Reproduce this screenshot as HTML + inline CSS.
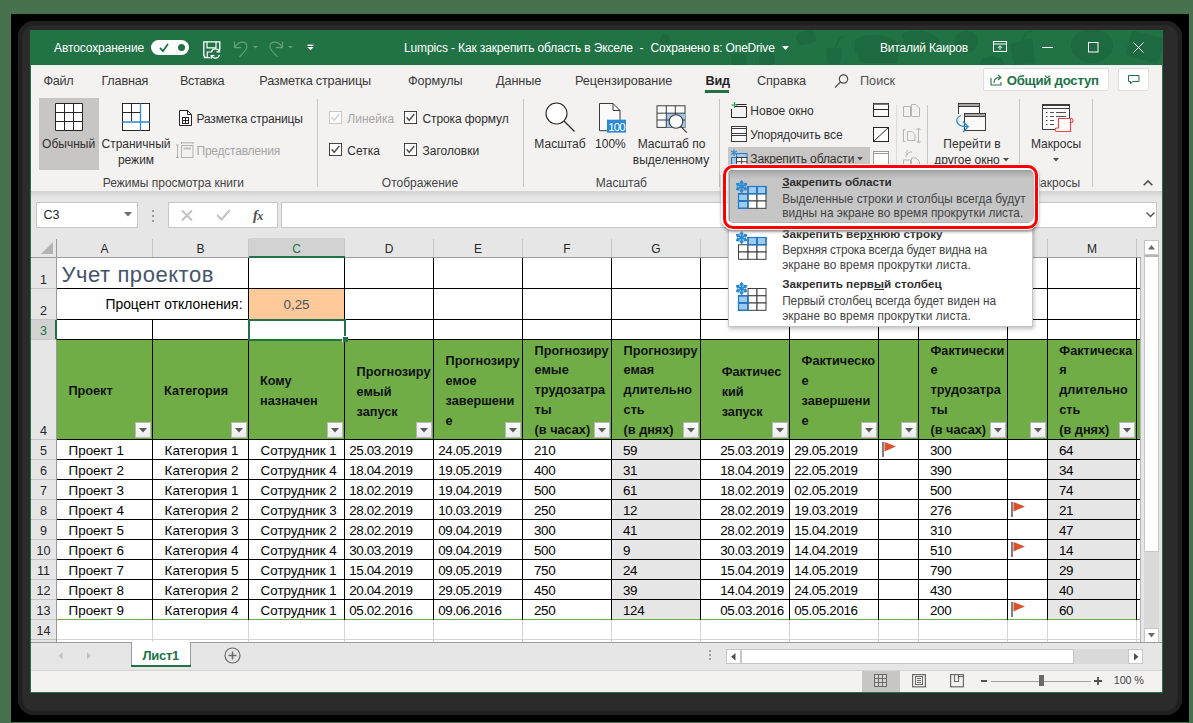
<!DOCTYPE html>
<html><head><meta charset="utf-8">
<style>
*{margin:0;padding:0;box-sizing:border-box}
html,body{width:1193px;height:723px;overflow:hidden;background:#48724e;font-family:"Liberation Sans", sans-serif;position:relative}
.a{position:absolute}
.t{position:absolute;white-space:nowrap;line-height:1}
svg{overflow:visible}
</style></head><body>

<div class="a" style="left:11px;top:14px;width:1178px;height:708px;background:#000;"></div>
<div class="a" style="left:18px;top:21px;width:1164px;height:694px;background:#2b2b2b;border-radius:16px;box-shadow:inset 0 0 0 4px #202020, inset 0 0 0 5px #272727"></div>
<div class="a" style="left:30px;top:30px;width:1133px;height:663px;background:#f3f2f1;border:1px solid #217346"></div>
<div class="a" style="left:30px;top:30px;width:1133px;height:35px;background:#217346;"></div>
<svg class="a" style="left:630px;top:30px;overflow:hidden" width="533" height="35" viewBox="0 0 533 35"><g fill="#1e6a40">
<ellipse cx="35" cy="10" rx="5" ry="6"/>
<rect x="101" y="24" width="15" height="12" rx="3"/>
<ellipse cx="137" cy="29" rx="8" ry="9"/>
<rect x="166" y="1" width="20" height="13" rx="5" transform="rotate(-10 176 7)"/>
<path d="M196 18 L212 18 L210 34 L198 34 Z"/><path d="M205 18 L210 8 L214 7" stroke="#1e6a40" stroke-width="1.5" fill="none"/>
<path d="M227 8 C240 2 262 4 268 14 L268 33 L232 33 C226 26 222 14 227 8 Z"/>
<path d="M272 4 C282 -2 305 0 309 10 L306 22 L276 22 Z"/>
<ellipse cx="336" cy="12" rx="12" ry="11"/>
<ellipse cx="362" cy="34" rx="12" ry="8"/>
<path d="M380 14 L402 8 L405 33 L384 35 Z"/><path d="M392 10 L396 2 L402 1" stroke="#1e6a40" stroke-width="1.5" fill="none"/>
<ellipse cx="462" cy="16" rx="21" ry="17"/>
<rect x="498" y="4" width="34" height="26" rx="4" transform="rotate(15 515 17)"/>
</g></svg>
<div class="t" style="left:54.00px;top:41.84px;font-size:12px;color:#ffffff;font-weight:400;letter-spacing:-0.1px">Автосохранение</div>
<div class="a" style="left:151px;top:40px;width:38px;height:15px;background:#ffffff;border-radius:8px"></div>
<svg class="a" style="left:158px;top:42px;" width="12" height="11" viewBox="0 0 12 11"><path d="M2 6 L5 9 L10 2" stroke="#217346" stroke-width="1.8" fill="none"/></svg>
<div class="a" style="left:178px;top:44px;width:7px;height:7px;background:#217346;border-radius:50%"></div>
<svg class="a" style="left:203px;top:41px;" width="19" height="19" viewBox="0 0 19 19"><path d="M2.5 16.5 L0.8 14.8 V0.8 H16.8 V8" stroke="#fff" stroke-width="1.3" fill="none"/><path d="M4 0.8 V6.8 H13 V0.8" stroke="#fff" stroke-width="1.2" fill="none"/><path d="M0.8 16.6 H7" stroke="#fff" stroke-width="1.3"/><path d="M4.2 16.6 V11 H8" stroke="#fff" stroke-width="1.2" fill="none"/><path d="M8.3 11.3 A4.3 4.3 0 0 1 16.3 10.2 M16.4 13.8 A4.3 4.3 0 0 1 8.5 15" stroke="#fff" stroke-width="1.3" fill="none"/><path d="M16.6 7.6 V10.8 H13.4 M8.2 17.8 V14.6 H11.4" stroke="#fff" stroke-width="1.2" fill="none"/></svg>
<svg class="a" style="left:233px;top:40px;" width="28" height="18" viewBox="0 0 28 18"><path d="M1.5 1.5 V7.6 H8" stroke="#64a07c" stroke-width="1.1" fill="none"/><path d="M1.8 7.4 C5 1 14 0 14 6.5 C14 10 9.5 13.5 6.5 16.8" stroke="#64a07c" stroke-width="1.1" fill="none"/><path d="M20 6 H25 L22.5 8.6 Z" fill="#64a07c"/></svg>
<svg class="a" style="left:268px;top:40px;" width="28" height="18" viewBox="0 0 28 18"><path d="M14.5 1.5 V7.6 H8" stroke="#64a07c" stroke-width="1.1" fill="none"/><path d="M14.2 7.4 C11 1 2 0 2 6.5 C2 10 6.5 13.5 9.5 16.8" stroke="#64a07c" stroke-width="1.1" fill="none"/><path d="M20 6 H25 L22.5 8.6 Z" fill="#64a07c"/></svg>
<svg class="a" style="left:307px;top:44px;" width="8" height="8" viewBox="0 0 8 8"><rect x="0.5" y="0.6" width="6" height="1.4" fill="#fff"/><path d="M0.3 3 H6.7 L3.5 6.3 Z" fill="#fff"/></svg>
<div class="t" style="left:404.00px;top:41.84px;font-size:12px;color:#ffffff;font-weight:400;letter-spacing:-0.13px">Lumpics - Как закрепить область в Экселе</div>
<div class="t" style="left:639.50px;top:41.84px;font-size:12px;color:#ffffff;font-weight:400;">-</div>
<div class="t" style="left:650.60px;top:41.84px;font-size:12px;color:#ffffff;font-weight:400;letter-spacing:-0.2px">Сохранено в: OneDrive</div>
<svg class="a" style="left:781.5px;top:46px;" width="8" height="5" viewBox="0 0 8 5"><path d="M0 0 H7 L3.5 4 Z" fill="#fff"/></svg>
<div class="t" style="left:880.00px;top:41.84px;font-size:12px;color:#ffffff;font-weight:400;letter-spacing:-0.18px">Виталий Каиров</div>
<svg class="a" style="left:993px;top:41px;" width="15" height="12" viewBox="0 0 15 12"><rect x="0.5" y="0.5" width="13" height="10" stroke="#fff" fill="none"/><path d="M0.5 3 H13.5" stroke="#fff"/><path d="M7 9 V5 M5 6.8 L7 4.8 L9 6.8" stroke="#fff" fill="none"/></svg>
<div class="a" style="left:1042px;top:47px;width:11px;height:1px;background:#fff;"></div>
<svg class="a" style="left:1088px;top:42px;" width="11" height="11" viewBox="0 0 11 11"><rect x="0.5" y="0.5" width="9.5" height="9.5" stroke="#fff" fill="none"/></svg>
<svg class="a" style="left:1133px;top:42px;" width="11" height="11" viewBox="0 0 11 11"><path d="M0.5 0.5 L10.5 10.5 M10.5 0.5 L0.5 10.5" stroke="#fff" stroke-width="1"/></svg>
<div class="t" style="left:43.40px;top:74.75px;font-size:12.7px;color:#3b3a39;font-weight:400;letter-spacing:-0.3px">Файл</div>
<div class="t" style="left:101.40px;top:74.75px;font-size:12.7px;color:#3b3a39;font-weight:400;letter-spacing:-0.2px">Главная</div>
<div class="t" style="left:179.90px;top:74.75px;font-size:12.7px;color:#3b3a39;font-weight:400;letter-spacing:-0.4px">Вставка</div>
<div class="t" style="left:259.30px;top:74.75px;font-size:12.7px;color:#3b3a39;font-weight:400;letter-spacing:-0.2px">Разметка страницы</div>
<div class="t" style="left:408.00px;top:74.75px;font-size:12.7px;color:#3b3a39;font-weight:400;letter-spacing:-0.1px">Формулы</div>
<div class="t" style="left:496.00px;top:74.75px;font-size:12.7px;color:#3b3a39;font-weight:400;letter-spacing:-0.1px">Данные</div>
<div class="t" style="left:575.00px;top:74.75px;font-size:12.7px;color:#3b3a39;font-weight:400;letter-spacing:-0.05px">Рецензирование</div>
<div class="t" style="left:705.60px;top:74.75px;font-size:12.7px;color:#262626;font-weight:700;letter-spacing:-0.3px">Вид</div>
<div class="a" style="left:705px;top:90px;width:24px;height:3px;background:#217346;"></div>
<div class="t" style="left:757.00px;top:74.75px;font-size:12.7px;color:#3b3a39;font-weight:400;letter-spacing:-0.1px">Справка</div>
<svg class="a" style="left:834px;top:74px;" width="15" height="14" viewBox="0 0 15 14"><circle cx="9.5" cy="5" r="4.2" stroke="#505050" stroke-width="1.2" fill="none"/><path d="M6.5 8 L1 13.5" stroke="#505050" stroke-width="1.3"/></svg>
<div class="t" style="left:860.00px;top:74.75px;font-size:12.7px;color:#505050;font-weight:400;">Поиск</div>
<div class="a" style="left:983px;top:68px;width:126px;height:23px;background:#fff;border:1px solid #e1dfdd;border-radius:2px"></div>
<svg class="a" style="left:990px;top:73px;" width="14" height="13" viewBox="0 0 14 13"><path d="M1 5 V12 H11 V9" stroke="#217346" stroke-width="1.1" fill="none"/><path d="M4 10 C4 6 6 4.5 10 4.5 M8 2 L11 4.5 L8 7" stroke="#217346" stroke-width="1.1" fill="none"/></svg>
<div class="t" style="left:1006.70px;top:74.33px;font-size:13.2px;color:#217346;font-weight:700;letter-spacing:-0.25px">Общий доступ</div>
<div class="a" style="left:1118px;top:68px;width:31px;height:23px;background:#fff;border:1px solid #e1dfdd;border-radius:2px"></div>
<svg class="a" style="left:1128px;top:75px;" width="12" height="10" viewBox="0 0 12 10"><path d="M0.5 0.5 H11 V6.5 H4.5 L2.5 9 V6.5 H0.5 Z" stroke="#217346" stroke-width="1" fill="none"/></svg>
<div class="a" style="left:31px;top:191px;width:1131px;height:1px;background:#dadada;"></div>
<div class="a" style="left:31px;top:192px;width:1131px;height:2px;background:#e0e0e0;"></div>
<div class="a" style="left:39px;top:98px;width:60px;height:72px;background:#c8c6c4;"></div>
<svg class="a" style="left:55px;top:103px;background:#fff" width="28" height="28" viewBox="0 0 28 28"><path d="M0.5 0.5 V27.5" stroke="#262626"/><path d="M9.5 0.5 V27.5" stroke="#262626"/><path d="M18.5 0.5 V27.5" stroke="#262626"/><path d="M27.5 0.5 V27.5" stroke="#262626"/><path d="M0.5 0.5 H27.5" stroke="#262626"/><path d="M0.5 9.5 H27.5" stroke="#262626"/><path d="M0.5 18.5 H27.5" stroke="#262626"/><path d="M0.5 27.5 H27.5" stroke="#262626"/></svg>
<div class="t" style="left:-231.40px;width:600px;text-align:center;top:137.84px;font-size:12px;color:#303030;font-weight:400;">Обычный</div>
<svg class="a" style="left:122px;top:103px;" width="28" height="28" viewBox="0 0 28 28"><rect x="0.5" y="0.5" width="27" height="27" stroke="#262626" fill="#fff"/><path d="M0.5 9.5 H18 M9.5 0.5 V18" stroke="#262626"/><path d="M0.5 19 H27.5 M18.5 0.5 V27.5" stroke="#2a8ad4" stroke-width="1.3"/></svg>
<div class="t" style="left:-164.00px;width:600px;text-align:center;top:137.84px;font-size:12px;color:#303030;font-weight:400;">Страничный</div>
<div class="t" style="left:-164.00px;width:600px;text-align:center;top:153.84px;font-size:12px;color:#303030;font-weight:400;">режим</div>
<svg class="a" style="left:178.5px;top:110px;" width="14" height="17" viewBox="0 0 14 17"><path d="M0.5 0.5 H8.5 L12.5 4.5 V15.5 H0.5 Z" stroke="#262626" fill="#fff"/><path d="M8.5 0.5 V4.5 H12.5" stroke="#262626" fill="none"/><rect x="3.5" y="7.5" width="6" height="6" stroke="#262626" fill="none"/><path d="M6.5 7.5 V13.5 M3.5 10.5 H9.5" stroke="#262626"/></svg>
<div class="t" style="left:196.50px;top:112.84px;font-size:12px;color:#303030;font-weight:400;letter-spacing:-0.15px">Разметка страницы</div>
<svg class="a" style="left:176px;top:142px;" width="19" height="17" viewBox="0 0 19 17"><path d="M1.5 3 V15.5 M0 3 H3 M0 15.5 H3 M5 0.8 H17.5 M5.5 0 V2 M17 0 V2" stroke="#b0b0b0" fill="none"/><rect x="5.5" y="3.5" width="11.5" height="12" stroke="#b0b0b0" fill="none"/><rect x="7.5" y="5.5" width="7.5" height="2" fill="#c0c0c0"/></svg>
<div class="t" style="left:196.50px;top:144.84px;font-size:12px;color:#a6a6a6;font-weight:400;letter-spacing:-0.22px">Представления</div>
<div class="t" style="left:-126.60px;width:600px;text-align:center;top:176.84px;font-size:12px;color:#444;font-weight:400;">Режимы просмотра книги</div>
<div class="a" style="left:317px;top:99px;width:1px;height:88px;background:#c8c6c4;"></div>
<svg class="a" style="left:329px;top:111px;" width="13" height="13" viewBox="0 0 13 13"><rect x="0.5" y="0.5" width="12" height="12" stroke="#c8c8c8" fill="#fff"/><path d="M2.6 6.3 L5.2 9.3 L10.3 3" stroke="#cfcfcf" stroke-width="1.5" fill="none"/></svg>
<div class="t" style="left:347.30px;top:112.84px;font-size:12px;color:#a6a6a6;font-weight:400;">Линейка</div>
<svg class="a" style="left:404px;top:111px;" width="13" height="13" viewBox="0 0 13 13"><rect x="0.5" y="0.5" width="12" height="12" stroke="#444" fill="#fff"/><path d="M2.6 6.3 L5.2 9.3 L10.3 3" stroke="#555" stroke-width="1.5" fill="none"/></svg>
<div class="t" style="left:422.50px;top:112.84px;font-size:12px;color:#303030;font-weight:400;letter-spacing:-0.1px">Строка формул</div>
<svg class="a" style="left:329px;top:142.5px;" width="13" height="13" viewBox="0 0 13 13"><rect x="0.5" y="0.5" width="12" height="12" stroke="#444" fill="#fff"/><path d="M2.6 6.3 L5.2 9.3 L10.3 3" stroke="#555" stroke-width="1.5" fill="none"/></svg>
<div class="t" style="left:347.30px;top:144.84px;font-size:12px;color:#303030;font-weight:400;">Сетка</div>
<svg class="a" style="left:404px;top:142.5px;" width="13" height="13" viewBox="0 0 13 13"><rect x="0.5" y="0.5" width="12" height="12" stroke="#444" fill="#fff"/><path d="M2.6 6.3 L5.2 9.3 L10.3 3" stroke="#555" stroke-width="1.5" fill="none"/></svg>
<div class="t" style="left:422.50px;top:144.84px;font-size:12px;color:#303030;font-weight:400;">Заголовки</div>
<div class="t" style="left:120.00px;width:600px;text-align:center;top:176.84px;font-size:12px;color:#444;font-weight:400;">Отображение</div>
<div class="a" style="left:523px;top:99px;width:1px;height:88px;background:#c8c6c4;"></div>
<svg class="a" style="left:545px;top:102px;" width="31" height="31" viewBox="0 0 31 31"><circle cx="11.5" cy="11.5" r="10.5" stroke="#262626" stroke-width="1.1" fill="#fff"/><path d="M19 19 L29.5 29.5" stroke="#262626" stroke-width="1.2"/></svg>
<div class="t" style="left:260.00px;width:600px;text-align:center;top:137.84px;font-size:12px;color:#303030;font-weight:400;">Масштаб</div>
<svg class="a" style="left:599px;top:103px;" width="28" height="30" viewBox="0 0 28 30"><path d="M0.5 0.5 H14 L21 7.5 V27.7 H0.5 Z" stroke="#3c3c3c" fill="#fafafa"/><path d="M14 0.5 V7.5 H21" stroke="#3c3c3c" fill="none"/><rect x="8" y="16.7" width="19" height="12.9" fill="#2a8ad4"/><text x="17.5" y="27.6" font-family="Liberation Sans" font-size="11.5" fill="#fff" text-anchor="middle" letter-spacing="-0.9">100</text></svg>
<div class="t" style="left:310.40px;width:600px;text-align:center;top:137.84px;font-size:12px;color:#303030;font-weight:400;">100%</div>
<svg class="a" style="left:656px;top:105px;" width="32" height="29" viewBox="0 0 32 29"><rect x="1" y="0.8" width="28" height="21.6" stroke="#3c3c3c" fill="#fafafa"/><rect x="10.3" y="8.2" width="18.7" height="14.2" fill="#9ec8ef"/><path d="M1 8.2 H29 M1 15 H29 M10.3 0.8 V22.4 M19.3 0.8 V22.4" stroke="#3c3c3c"/><circle cx="20" cy="16.5" r="6.8" stroke="#3c3c3c" stroke-width="1.1" fill="#fafafa"/><path d="M24.8 21.3 L30.8 27.6" stroke="#3c3c3c" stroke-width="1.2"/></svg>
<div class="t" style="left:371.60px;width:600px;text-align:center;top:137.84px;font-size:12px;color:#303030;font-weight:400;">Масштаб по</div>
<div class="t" style="left:371.00px;width:600px;text-align:center;top:153.84px;font-size:12px;color:#303030;font-weight:400;">выделенному</div>
<div class="t" style="left:321.30px;width:600px;text-align:center;top:176.84px;font-size:12px;color:#444;font-weight:400;">Масштаб</div>
<div class="a" style="left:719px;top:99px;width:1px;height:88px;background:#c8c6c4;"></div>
<svg class="a" style="left:731px;top:102px;" width="17" height="16" viewBox="0 0 17 16"><path d="M3.5 4.5 H15.5 V15.5 H0.5 V7" stroke="#262626" fill="none"/><path d="M5 2.5 H15.5" stroke="#262626"/><path d="M3.5 0 V6 M0.5 3 H6.5" stroke="#1aa24c" stroke-width="1.2"/></svg>
<div class="t" style="left:750.30px;top:105.34px;font-size:12px;color:#303030;font-weight:400;">Новое окно</div>
<svg class="a" style="left:731px;top:126px;" width="17" height="17" viewBox="0 0 17 17"><rect x="0.5" y="0.5" width="15" height="15" stroke="#3c3c3c" fill="#fafafa"/><path d="M0.5 2.5 H15.5 M0.5 7.5 H15.5 M0.5 9.5 H15.5" stroke="#3c3c3c"/></svg>
<div class="t" style="left:750.30px;top:128.84px;font-size:12px;color:#303030;font-weight:400;letter-spacing:-0.1px">Упорядочить все</div>
<div class="a" style="left:728px;top:147px;width:142px;height:23px;background:#c8c6c4;"></div>
<svg class="a" style="left:731px;top:149px;" width="17" height="18" viewBox="0 0 17 18"><rect x="5.5" y="4.5" width="10.5" height="4" fill="#9ecbf0" stroke="#1e7bd0"/><rect x="0.5" y="8.5" width="5" height="8.5" fill="#9ecbf0" stroke="#1e7bd0"/><rect x="5.5" y="8.5" width="10.5" height="8.5" fill="#fff" stroke="#3c3c3c"/><path d="M10.7 8.5 V17 M5.5 12.7 H16" stroke="#3c3c3c"/><path d="M3 0.5 V7 M0.2 2.1 L5.8 5.4 M5.8 2.1 L0.2 5.4" stroke="#2a8ad4" stroke-width="1.2"/></svg>
<div class="t" style="left:750.30px;top:152.84px;font-size:12px;color:#303030;font-weight:400;letter-spacing:-0.1px">Закрепить области</div>
<svg class="a" style="left:857px;top:157px;" width="7" height="4" viewBox="0 0 7 4"><path d="M0 0 H6 L3 3.5 Z" fill="#505050"/></svg>
<svg class="a" style="left:873px;top:103px;" width="16" height="14" viewBox="0 0 16 14"><rect x="0.5" y="0.5" width="15" height="13" stroke="#262626" fill="#fafafa"/><rect x="0.5" y="0.5" width="15" height="1.5" fill="#777"/><path d="M0.5 6.5 H15.5" stroke="#262626"/></svg>
<svg class="a" style="left:873px;top:127px;" width="16" height="15" viewBox="0 0 16 15"><rect x="0.5" y="0.5" width="15" height="14" stroke="#262626" fill="#fff"/><path d="M0.5 14.5 L15.5 0.5" stroke="#262626"/></svg>
<svg class="a" style="left:873px;top:151px;" width="16" height="16" viewBox="0 0 16 16"><rect x="0.5" y="0.5" width="15" height="15" stroke="#9a9a9a" fill="#fff"/><path d="M0.5 2.5 H15.5" stroke="#9a9a9a"/></svg>
<div class="a" style="left:896px;top:105px;width:1px;height:62px;background:#dcdcdc;"></div>
<svg class="a" style="left:903px;top:104px;" width="18" height="13" viewBox="0 0 18 13"><path d="M0.5 2.5 H7.5 V12.5 H0.5 Z M8.5 0.5 H13 L16.5 4 V12.5 H8.5 Z" stroke="#b5b5b5" fill="none"/></svg>
<svg class="a" style="left:903px;top:127px;" width="18" height="17" viewBox="0 0 18 17"><path d="M2.5 2.5 H0.5 V14.5 H2.5" stroke="#b5b5b5" fill="none"/><path d="M4.5 4.5 H9 L12 7.5 V13.5 H4.5 Z" stroke="#b5b5b5" fill="none"/><path d="M15.5 1 V16 M13.5 3 L15.5 1 L17.5 3 M13.5 14 L15.5 16 L17.5 14" stroke="#b5b5b5" fill="none"/></svg>
<svg class="a" style="left:903px;top:150px;" width="18" height="17" viewBox="0 0 18 17"><path d="M0.5 10 H7.5 V16.5 H0.5 Z M8.5 8 H13 L16.5 11.5 V16.5 H8.5 Z" stroke="#b5b5b5" fill="none"/><path d="M3 7 C3 3 6 2 9 2 M5 0 L3 2.5 L5 5" stroke="#b5b5b5" fill="none"/></svg>
<div class="a" style="left:927px;top:105px;width:1px;height:82px;background:#c8c6c4;"></div>
<svg class="a" style="left:953px;top:102px;" width="34" height="30" viewBox="0 0 34 30"><path d="M5.5 12 V1.5 H26.5 V11" stroke="#3c3c3c" fill="#fafafa"/><rect x="5.5" y="1.5" width="21" height="3" fill="#a6a6a6" stroke="#3c3c3c"/><rect x="11.5" y="11.5" width="21" height="17" stroke="#3c3c3c" fill="#fafafa"/><rect x="11.5" y="11.5" width="21" height="3" fill="#a6a6a6" stroke="#3c3c3c"/><path d="M8 13.5 C1.5 16 1.5 24.5 14.5 24.7" stroke="#2a8ad4" stroke-width="1.3" fill="none"/><path d="M10 19.5 L15.2 24.7 L10 30" stroke="#2a8ad4" stroke-width="1.3" fill="none"/></svg>
<div class="t" style="left:672.00px;width:600px;text-align:center;top:137.84px;font-size:12px;color:#303030;font-weight:400;">Перейти в</div>
<div class="t" style="left:667.00px;width:600px;text-align:center;top:153.84px;font-size:12px;color:#303030;font-weight:400;">другое окно</div>
<svg class="a" style="left:1003px;top:158px;" width="7" height="4" viewBox="0 0 7 4"><path d="M0 0 H6 L3 3.5 Z" fill="#505050"/></svg>
<div class="a" style="left:1019px;top:99px;width:1px;height:88px;background:#c8c6c4;"></div>
<svg class="a" style="left:1041px;top:103px;" width="34" height="31" viewBox="0 0 34 31"><rect x="1.5" y="1.5" width="27" height="25" stroke="#3c3c3c" fill="#fafafa"/><path d="M1.5 2 H28.5" stroke="#3c3c3c" stroke-width="2"/><path d="M1.5 5.5 H28.5" stroke="#3c3c3c"/><path d="M5 9.5 H6.5 M9 9.5 H13 M15 9.5 H25 M5 13.5 H6.5 M9 13.5 H13 M15 13.5 H25 M5 17.5 H6.5 M9 17.5 H13 M5 21.5 H6.5 M9 21.5 H13" stroke="#505050"/><path d="M17.5 15.5 H30.5 C32.5 15.5 32.5 19.5 30.5 19.5 H29.5 V28.5 H16 C13.5 28.5 13.5 25 16 25 H17.5 Z" stroke="#e8454b" stroke-width="1.1" fill="#fafafa"/><path d="M29.5 15.5 V19.5" stroke="#e8454b" stroke-width="1.1"/></svg>
<div class="t" style="left:756.00px;width:600px;text-align:center;top:137.84px;font-size:12px;color:#303030;font-weight:400;">Макросы</div>
<svg class="a" style="left:1053px;top:158px;" width="7" height="4" viewBox="0 0 7 4"><path d="M0 0 H6 L3 3.5 Z" fill="#505050"/></svg>
<div class="t" style="left:755.00px;width:600px;text-align:center;top:176.84px;font-size:12px;color:#444;font-weight:400;">Макросы</div>
<div class="a" style="left:1092px;top:99px;width:1px;height:88px;background:#c8c6c4;"></div>
<svg class="a" style="left:1143px;top:180px;" width="10" height="6" viewBox="0 0 10 6"><path d="M0.7 5.3 L5 1 L9.3 5.3" stroke="#505050" stroke-width="1.6" fill="none"/></svg>
<div class="a" style="left:31px;top:191px;width:1131px;height:47px;background:#e6e6e6;"></div>
<div class="a" style="left:31px;top:191px;width:1131px;height:7px;background:linear-gradient(#d2d2d2,#dadada 40%,#e6e6e6);"></div>
<div class="a" style="left:36px;top:202px;width:102px;height:26px;background:#fff;border:1px solid #c6c6c6"></div>
<div class="t" style="left:43.40px;top:209.42px;font-size:12.5px;color:#262626;font-weight:400;">C3</div>
<svg class="a" style="left:124px;top:212px;" width="9" height="5" viewBox="0 0 9 5"><path d="M0 0 H8 L4 4.5 Z" fill="#6a6a6a"/></svg>
<div class="a" style="left:152px;top:210px;width:2px;height:2px;background:#a0a0a0;"></div>
<div class="a" style="left:152px;top:215px;width:2px;height:2px;background:#a0a0a0;"></div>
<div class="a" style="left:152px;top:220px;width:2px;height:2px;background:#a0a0a0;"></div>
<div class="a" style="left:168px;top:202px;width:110px;height:26px;background:#fff;border:1px solid #c6c6c6"></div>
<svg class="a" style="left:181px;top:210px;" width="12" height="11" viewBox="0 0 12 11"><path d="M1 0.5 L11 10.5 M11 0.5 L1 10.5" stroke="#c0c0c0" stroke-width="1.8"/></svg>
<svg class="a" style="left:216px;top:209px;" width="15" height="12" viewBox="0 0 15 12"><path d="M1 6 L5.5 10.5 L14 1" stroke="#c4c4c4" stroke-width="2.2" fill="none"/></svg>
<div class="t" style="left:253.00px;top:207.73px;font-size:14.5px;color:#505050;font-weight:700;font-family:'Liberation Serif'"><i>f</i><span style="font-size:12px;margin-left:-0.5px"><i>x</i></span></div>
<div class="a" style="left:281px;top:202px;width:876px;height:26px;background:#fff;border:1px solid #c6c6c6"></div>
<svg class="a" style="left:1146px;top:212px;" width="9" height="6" viewBox="0 0 9 6"><path d="M0.5 0.5 L4.5 4.5 L8.5 0.5" stroke="#505050" stroke-width="1.3" fill="none"/></svg>
<div class="a" style="left:31px;top:238px;width:1110px;height:404px;background:#fff;"></div>
<div class="a" style="left:31px;top:238px;width:1110px;height:20px;background:#e6e6e6;"></div>
<div class="a" style="left:31px;top:258px;width:26px;height:384px;background:#e6e6e6;"></div>
<div class="a" style="left:249px;top:238px;width:96px;height:19px;background:#d2d2d2;"></div>
<div class="a" style="left:31px;top:320px;width:25px;height:20px;background:#d2d2d2;"></div>
<div class="a" style="left:152px;top:239px;width:1px;height:18px;background:#c6c6c6;"></div>
<div class="a" style="left:248px;top:239px;width:1px;height:18px;background:#c6c6c6;"></div>
<div class="a" style="left:344px;top:239px;width:1px;height:18px;background:#c6c6c6;"></div>
<div class="a" style="left:433px;top:239px;width:1px;height:18px;background:#c6c6c6;"></div>
<div class="a" style="left:522px;top:239px;width:1px;height:18px;background:#c6c6c6;"></div>
<div class="a" style="left:611px;top:239px;width:1px;height:18px;background:#c6c6c6;"></div>
<div class="a" style="left:700px;top:239px;width:1px;height:18px;background:#c6c6c6;"></div>
<div class="a" style="left:789px;top:239px;width:1px;height:18px;background:#c6c6c6;"></div>
<div class="a" style="left:878px;top:239px;width:1px;height:18px;background:#c6c6c6;"></div>
<div class="a" style="left:918px;top:239px;width:1px;height:18px;background:#c6c6c6;"></div>
<div class="a" style="left:1007px;top:239px;width:1px;height:18px;background:#c6c6c6;"></div>
<div class="a" style="left:1047px;top:239px;width:1px;height:18px;background:#c6c6c6;"></div>
<div class="a" style="left:1136px;top:239px;width:1px;height:18px;background:#c6c6c6;"></div>
<div class="a" style="left:56px;top:239px;width:1px;height:403px;background:#9b9b9b;"></div>
<div class="a" style="left:31px;top:257px;width:1110px;height:1px;background:#9b9b9b;"></div>
<div class="a" style="left:249px;top:256px;width:96px;height:2px;background:#217346;"></div>
<div class="a" style="left:55px;top:320px;width:2px;height:20px;background:#217346;"></div>
<svg class="a" style="left:41px;top:242px;" width="13" height="13" viewBox="0 0 13 13"><path d="M12 0 V12 H0 Z" fill="#b4b4b4"/></svg>
<div class="t" style="left:-195.50px;width:600px;text-align:center;top:242.84px;font-size:12px;color:#262626;font-weight:400;">A</div>
<div class="t" style="left:-99.50px;width:600px;text-align:center;top:242.84px;font-size:12px;color:#262626;font-weight:400;">B</div>
<div class="t" style="left:-3.50px;width:600px;text-align:center;top:242.84px;font-size:12px;color:#217346;font-weight:400;">C</div>
<div class="t" style="left:89.00px;width:600px;text-align:center;top:242.84px;font-size:12px;color:#262626;font-weight:400;">D</div>
<div class="t" style="left:178.00px;width:600px;text-align:center;top:242.84px;font-size:12px;color:#262626;font-weight:400;">E</div>
<div class="t" style="left:267.00px;width:600px;text-align:center;top:242.84px;font-size:12px;color:#262626;font-weight:400;">F</div>
<div class="t" style="left:356.00px;width:600px;text-align:center;top:242.84px;font-size:12px;color:#262626;font-weight:400;">G</div>
<div class="t" style="left:792.00px;width:600px;text-align:center;top:242.84px;font-size:12px;color:#262626;font-weight:400;">M</div>
<div class="t" style="left:-256.50px;width:600px;text-align:center;top:274.33px;font-size:12.6px;color:#262626;font-weight:400;">1</div>
<div class="t" style="left:-256.50px;width:600px;text-align:center;top:305.33px;font-size:12.6px;color:#262626;font-weight:400;">2</div>
<div class="t" style="left:-256.50px;width:600px;text-align:center;top:325.33px;font-size:12.6px;color:#217346;font-weight:400;">3</div>
<div class="t" style="left:-256.50px;width:600px;text-align:center;top:425.33px;font-size:12.6px;color:#262626;font-weight:400;">4</div>
<div class="t" style="left:-256.50px;width:600px;text-align:center;top:445.33px;font-size:12.6px;color:#262626;font-weight:400;">5</div>
<div class="t" style="left:-256.50px;width:600px;text-align:center;top:465.33px;font-size:12.6px;color:#262626;font-weight:400;">6</div>
<div class="t" style="left:-256.50px;width:600px;text-align:center;top:485.33px;font-size:12.6px;color:#262626;font-weight:400;">7</div>
<div class="t" style="left:-256.50px;width:600px;text-align:center;top:505.33px;font-size:12.6px;color:#262626;font-weight:400;">8</div>
<div class="t" style="left:-256.50px;width:600px;text-align:center;top:525.33px;font-size:12.6px;color:#262626;font-weight:400;">9</div>
<div class="t" style="left:-256.50px;width:600px;text-align:center;top:545.33px;font-size:12.6px;color:#262626;font-weight:400;">10</div>
<div class="t" style="left:-256.50px;width:600px;text-align:center;top:565.33px;font-size:12.6px;color:#262626;font-weight:400;">11</div>
<div class="t" style="left:-256.50px;width:600px;text-align:center;top:585.33px;font-size:12.6px;color:#262626;font-weight:400;">12</div>
<div class="t" style="left:-256.50px;width:600px;text-align:center;top:605.33px;font-size:12.6px;color:#262626;font-weight:400;">13</div>
<div class="t" style="left:-256.50px;width:600px;text-align:center;top:625.33px;font-size:12.6px;color:#262626;font-weight:400;">14</div>
<div class="a" style="left:31px;top:288px;width:25px;height:1px;background:#c6c6c6;"></div>
<div class="a" style="left:31px;top:319px;width:25px;height:1px;background:#c6c6c6;"></div>
<div class="a" style="left:31px;top:339px;width:25px;height:1px;background:#c6c6c6;"></div>
<div class="a" style="left:31px;top:439px;width:25px;height:1px;background:#c6c6c6;"></div>
<div class="a" style="left:31px;top:459px;width:25px;height:1px;background:#c6c6c6;"></div>
<div class="a" style="left:31px;top:479px;width:25px;height:1px;background:#c6c6c6;"></div>
<div class="a" style="left:31px;top:499px;width:25px;height:1px;background:#c6c6c6;"></div>
<div class="a" style="left:31px;top:519px;width:25px;height:1px;background:#c6c6c6;"></div>
<div class="a" style="left:31px;top:539px;width:25px;height:1px;background:#c6c6c6;"></div>
<div class="a" style="left:31px;top:559px;width:25px;height:1px;background:#c6c6c6;"></div>
<div class="a" style="left:31px;top:579px;width:25px;height:1px;background:#c6c6c6;"></div>
<div class="a" style="left:31px;top:599px;width:25px;height:1px;background:#c6c6c6;"></div>
<div class="a" style="left:31px;top:619px;width:25px;height:1px;background:#c6c6c6;"></div>
<div class="a" style="left:31px;top:639px;width:25px;height:1px;background:#c6c6c6;"></div>
<div class="a" style="left:249px;top:289px;width:95px;height:30px;background:#ffc999;"></div>
<div class="a" style="left:57px;top:340px;width:1083px;height:99px;background:#70ad47;"></div>
<div class="a" style="left:612px;top:440px;width:88px;height:179px;background:#e7e6e6;"></div>
<div class="a" style="left:1048px;top:440px;width:88px;height:179px;background:#e7e6e6;"></div>
<div class="a" style="left:152px;top:620px;width:1px;height:22px;background:#d4d4d4;"></div>
<div class="a" style="left:248px;top:620px;width:1px;height:22px;background:#d4d4d4;"></div>
<div class="a" style="left:344px;top:620px;width:1px;height:22px;background:#d4d4d4;"></div>
<div class="a" style="left:433px;top:620px;width:1px;height:22px;background:#d4d4d4;"></div>
<div class="a" style="left:522px;top:620px;width:1px;height:22px;background:#d4d4d4;"></div>
<div class="a" style="left:611px;top:620px;width:1px;height:22px;background:#d4d4d4;"></div>
<div class="a" style="left:700px;top:620px;width:1px;height:22px;background:#d4d4d4;"></div>
<div class="a" style="left:789px;top:620px;width:1px;height:22px;background:#d4d4d4;"></div>
<div class="a" style="left:878px;top:620px;width:1px;height:22px;background:#d4d4d4;"></div>
<div class="a" style="left:918px;top:620px;width:1px;height:22px;background:#d4d4d4;"></div>
<div class="a" style="left:1007px;top:620px;width:1px;height:22px;background:#d4d4d4;"></div>
<div class="a" style="left:1047px;top:620px;width:1px;height:22px;background:#d4d4d4;"></div>
<div class="a" style="left:1136px;top:620px;width:1px;height:22px;background:#d4d4d4;"></div>
<div class="a" style="left:57px;top:639px;width:1083px;height:1px;background:#d4d4d4;"></div>
<div class="a" style="left:57px;top:288px;width:1083px;height:1px;background:#000;"></div>
<div class="a" style="left:57px;top:319px;width:1083px;height:1px;background:#000;"></div>
<div class="a" style="left:57px;top:339px;width:1083px;height:1px;background:#000;"></div>
<div class="a" style="left:57px;top:439px;width:1083px;height:1px;background:#000;"></div>
<div class="a" style="left:57px;top:459px;width:1083px;height:1px;background:#000;"></div>
<div class="a" style="left:57px;top:479px;width:1083px;height:1px;background:#000;"></div>
<div class="a" style="left:57px;top:499px;width:1083px;height:1px;background:#000;"></div>
<div class="a" style="left:57px;top:519px;width:1083px;height:1px;background:#000;"></div>
<div class="a" style="left:57px;top:539px;width:1083px;height:1px;background:#000;"></div>
<div class="a" style="left:57px;top:559px;width:1083px;height:1px;background:#000;"></div>
<div class="a" style="left:57px;top:579px;width:1083px;height:1px;background:#000;"></div>
<div class="a" style="left:57px;top:599px;width:1083px;height:1px;background:#000;"></div>
<div class="a" style="left:57px;top:619px;width:1083px;height:1px;background:#000;"></div>
<div class="a" style="left:57px;top:619px;width:1083px;height:1px;background:#70ad47;"></div>
<div class="a" style="left:152px;top:320px;width:1px;height:300px;background:#000;"></div>
<div class="a" style="left:248px;top:258px;width:1px;height:362px;background:#000;"></div>
<div class="a" style="left:344px;top:258px;width:1px;height:362px;background:#000;"></div>
<div class="a" style="left:433px;top:258px;width:1px;height:362px;background:#000;"></div>
<div class="a" style="left:522px;top:258px;width:1px;height:362px;background:#000;"></div>
<div class="a" style="left:611px;top:258px;width:1px;height:362px;background:#000;"></div>
<div class="a" style="left:700px;top:258px;width:1px;height:362px;background:#000;"></div>
<div class="a" style="left:789px;top:258px;width:1px;height:362px;background:#000;"></div>
<div class="a" style="left:878px;top:258px;width:1px;height:362px;background:#000;"></div>
<div class="a" style="left:918px;top:258px;width:1px;height:362px;background:#000;"></div>
<div class="a" style="left:1007px;top:258px;width:1px;height:362px;background:#000;"></div>
<div class="a" style="left:1047px;top:258px;width:1px;height:362px;background:#000;"></div>
<div class="a" style="left:1136px;top:258px;width:1px;height:362px;background:#000;"></div>
<div class="a" style="left:1140px;top:258px;width:1px;height:384px;background:#b4b4b4;"></div>
<div class="a" style="left:248px;top:319px;width:98px;height:22px;background:none;border:2px solid #217346"></div>
<div class="a" style="left:342px;top:336px;width:6px;height:6px;background:#fff;"></div>
<div class="a" style="left:343px;top:337px;width:5px;height:5px;background:#217346;"></div>
<div class="t" style="left:61.50px;top:264.08px;font-size:22px;color:#44546a;font-weight:400;letter-spacing:0.55px">Учет проектов</div>
<div class="t" style="left:-357.50px;width:600px;text-align:right;top:298.03px;font-size:13.9px;color:#000;font-weight:400;">Процент отклонения:</div>
<div class="t" style="left:-3.50px;width:600px;text-align:center;top:298.46px;font-size:13.4px;color:#44546a;font-weight:400;">0,25</div>
<div class="t" style="left:68.40px;top:384.95px;font-size:12.7px;color:#111;font-weight:700;letter-spacing:0px">Проект</div>
<div class="t" style="left:164.00px;top:384.95px;font-size:12.7px;color:#111;font-weight:700;letter-spacing:0px">Категория</div>
<div class="t" style="left:260.00px;top:375.45px;font-size:12.7px;color:#111;font-weight:700;letter-spacing:0px">Кому</div>
<div class="t" style="left:260.00px;top:395.35px;font-size:12.7px;color:#111;font-weight:700;letter-spacing:0px">назначен</div>
<div class="t" style="left:356.60px;top:365.75px;font-size:12.7px;color:#111;font-weight:700;letter-spacing:0px">Прогнозиру</div>
<div class="t" style="left:356.60px;top:385.65px;font-size:12.7px;color:#111;font-weight:700;letter-spacing:0px">емый</div>
<div class="t" style="left:356.60px;top:405.55px;font-size:12.7px;color:#111;font-weight:700;letter-spacing:0px">запуск</div>
<div class="t" style="left:445.60px;top:355.15px;font-size:12.7px;color:#111;font-weight:700;letter-spacing:0px">Прогнозиру</div>
<div class="t" style="left:445.60px;top:375.05px;font-size:12.7px;color:#111;font-weight:700;letter-spacing:0px">емое</div>
<div class="t" style="left:445.60px;top:394.95px;font-size:12.7px;color:#111;font-weight:700;letter-spacing:0px">завершени</div>
<div class="t" style="left:445.60px;top:414.85px;font-size:12.7px;color:#111;font-weight:700;letter-spacing:0px">е</div>
<div class="t" style="left:534.60px;top:344.55px;font-size:12.7px;color:#111;font-weight:700;letter-spacing:0px">Прогнозиру</div>
<div class="t" style="left:534.60px;top:364.45px;font-size:12.7px;color:#111;font-weight:700;letter-spacing:0px">емые</div>
<div class="t" style="left:534.60px;top:384.35px;font-size:12.7px;color:#111;font-weight:700;letter-spacing:0px">трудозатра</div>
<div class="t" style="left:534.60px;top:404.25px;font-size:12.7px;color:#111;font-weight:700;letter-spacing:0px">ты</div>
<div class="t" style="left:534.60px;top:424.15px;font-size:12.7px;color:#111;font-weight:700;letter-spacing:0px">(в часах)</div>
<div class="t" style="left:623.60px;top:344.55px;font-size:12.7px;color:#111;font-weight:700;letter-spacing:0px">Прогнозиру</div>
<div class="t" style="left:623.60px;top:364.45px;font-size:12.7px;color:#111;font-weight:700;letter-spacing:0px">емая</div>
<div class="t" style="left:623.60px;top:384.35px;font-size:12.7px;color:#111;font-weight:700;letter-spacing:0px">длительно</div>
<div class="t" style="left:623.60px;top:404.25px;font-size:12.7px;color:#111;font-weight:700;letter-spacing:0px">сть</div>
<div class="t" style="left:623.60px;top:424.15px;font-size:12.7px;color:#111;font-weight:700;letter-spacing:0px">(в днях)</div>
<div class="t" style="left:721.70px;top:365.75px;font-size:12.7px;color:#111;font-weight:700;letter-spacing:0px">Фактичес</div>
<div class="t" style="left:721.70px;top:385.65px;font-size:12.7px;color:#111;font-weight:700;letter-spacing:0px">кий</div>
<div class="t" style="left:721.70px;top:405.55px;font-size:12.7px;color:#111;font-weight:700;letter-spacing:0px">запуск</div>
<div class="t" style="left:801.60px;top:355.15px;font-size:12.7px;color:#111;font-weight:700;letter-spacing:0px">Фактическо</div>
<div class="t" style="left:801.60px;top:375.05px;font-size:12.7px;color:#111;font-weight:700;letter-spacing:0px">е</div>
<div class="t" style="left:801.60px;top:394.95px;font-size:12.7px;color:#111;font-weight:700;letter-spacing:0px">завершени</div>
<div class="t" style="left:801.60px;top:414.85px;font-size:12.7px;color:#111;font-weight:700;letter-spacing:0px">е</div>
<div class="t" style="left:930.50px;top:344.55px;font-size:12.7px;color:#111;font-weight:700;letter-spacing:0px">Фактически</div>
<div class="t" style="left:930.50px;top:364.45px;font-size:12.7px;color:#111;font-weight:700;letter-spacing:0px">е</div>
<div class="t" style="left:930.50px;top:384.35px;font-size:12.7px;color:#111;font-weight:700;letter-spacing:0px">трудозатра</div>
<div class="t" style="left:930.50px;top:404.25px;font-size:12.7px;color:#111;font-weight:700;letter-spacing:0px">ты</div>
<div class="t" style="left:930.50px;top:424.15px;font-size:12.7px;color:#111;font-weight:700;letter-spacing:0px">(в часах)</div>
<div class="t" style="left:1059.30px;top:344.55px;font-size:12.7px;color:#111;font-weight:700;letter-spacing:0px">Фактическа</div>
<div class="t" style="left:1059.30px;top:364.45px;font-size:12.7px;color:#111;font-weight:700;letter-spacing:0px">я</div>
<div class="t" style="left:1059.30px;top:384.35px;font-size:12.7px;color:#111;font-weight:700;letter-spacing:0px">длительно</div>
<div class="t" style="left:1059.30px;top:404.25px;font-size:12.7px;color:#111;font-weight:700;letter-spacing:0px">сть</div>
<div class="t" style="left:1059.30px;top:424.15px;font-size:12.7px;color:#111;font-weight:700;letter-spacing:0px">(в днях)</div>
<div class="a" style="left:135px;top:422px;width:16px;height:16px;background:linear-gradient(#fdfdfd,#ececec);border:1px solid #b9b9b9"></div>
<svg class="a" style="left:139px;top:428px;" width="9" height="5" viewBox="0 0 9 5"><path d="M0 0 H8 L4 4.5 Z" fill="#595959"/></svg>
<div class="a" style="left:231px;top:422px;width:16px;height:16px;background:linear-gradient(#fdfdfd,#ececec);border:1px solid #b9b9b9"></div>
<svg class="a" style="left:235px;top:428px;" width="9" height="5" viewBox="0 0 9 5"><path d="M0 0 H8 L4 4.5 Z" fill="#595959"/></svg>
<div class="a" style="left:327px;top:422px;width:16px;height:16px;background:linear-gradient(#fdfdfd,#ececec);border:1px solid #b9b9b9"></div>
<svg class="a" style="left:331px;top:428px;" width="9" height="5" viewBox="0 0 9 5"><path d="M0 0 H8 L4 4.5 Z" fill="#595959"/></svg>
<div class="a" style="left:416px;top:422px;width:16px;height:16px;background:linear-gradient(#fdfdfd,#ececec);border:1px solid #b9b9b9"></div>
<svg class="a" style="left:420px;top:428px;" width="9" height="5" viewBox="0 0 9 5"><path d="M0 0 H8 L4 4.5 Z" fill="#595959"/></svg>
<div class="a" style="left:505px;top:422px;width:16px;height:16px;background:linear-gradient(#fdfdfd,#ececec);border:1px solid #b9b9b9"></div>
<svg class="a" style="left:509px;top:428px;" width="9" height="5" viewBox="0 0 9 5"><path d="M0 0 H8 L4 4.5 Z" fill="#595959"/></svg>
<div class="a" style="left:594px;top:422px;width:16px;height:16px;background:linear-gradient(#fdfdfd,#ececec);border:1px solid #b9b9b9"></div>
<svg class="a" style="left:598px;top:428px;" width="9" height="5" viewBox="0 0 9 5"><path d="M0 0 H8 L4 4.5 Z" fill="#595959"/></svg>
<div class="a" style="left:683px;top:422px;width:16px;height:16px;background:linear-gradient(#fdfdfd,#ececec);border:1px solid #b9b9b9"></div>
<svg class="a" style="left:687px;top:428px;" width="9" height="5" viewBox="0 0 9 5"><path d="M0 0 H8 L4 4.5 Z" fill="#595959"/></svg>
<div class="a" style="left:772px;top:422px;width:16px;height:16px;background:linear-gradient(#fdfdfd,#ececec);border:1px solid #b9b9b9"></div>
<svg class="a" style="left:776px;top:428px;" width="9" height="5" viewBox="0 0 9 5"><path d="M0 0 H8 L4 4.5 Z" fill="#595959"/></svg>
<div class="a" style="left:861px;top:422px;width:16px;height:16px;background:linear-gradient(#fdfdfd,#ececec);border:1px solid #b9b9b9"></div>
<svg class="a" style="left:865px;top:428px;" width="9" height="5" viewBox="0 0 9 5"><path d="M0 0 H8 L4 4.5 Z" fill="#595959"/></svg>
<div class="a" style="left:901px;top:422px;width:16px;height:16px;background:linear-gradient(#fdfdfd,#ececec);border:1px solid #b9b9b9"></div>
<svg class="a" style="left:905px;top:428px;" width="9" height="5" viewBox="0 0 9 5"><path d="M0 0 H8 L4 4.5 Z" fill="#595959"/></svg>
<div class="a" style="left:990px;top:422px;width:16px;height:16px;background:linear-gradient(#fdfdfd,#ececec);border:1px solid #b9b9b9"></div>
<svg class="a" style="left:994px;top:428px;" width="9" height="5" viewBox="0 0 9 5"><path d="M0 0 H8 L4 4.5 Z" fill="#595959"/></svg>
<div class="a" style="left:1030px;top:422px;width:16px;height:16px;background:linear-gradient(#fdfdfd,#ececec);border:1px solid #b9b9b9"></div>
<svg class="a" style="left:1034px;top:428px;" width="9" height="5" viewBox="0 0 9 5"><path d="M0 0 H8 L4 4.5 Z" fill="#595959"/></svg>
<div class="a" style="left:1119px;top:422px;width:16px;height:16px;background:linear-gradient(#fdfdfd,#ececec);border:1px solid #b9b9b9"></div>
<svg class="a" style="left:1123px;top:428px;" width="9" height="5" viewBox="0 0 9 5"><path d="M0 0 H8 L4 4.5 Z" fill="#595959"/></svg>
<div class="t" style="left:68.60px;top:443.66px;font-size:13.4px;color:#000;font-weight:400;letter-spacing:0px">Проект 1</div>
<div class="t" style="left:164.60px;top:443.66px;font-size:13.4px;color:#000;font-weight:400;letter-spacing:0px">Категория 1</div>
<div class="t" style="left:260.60px;top:443.66px;font-size:13.4px;color:#000;font-weight:400;letter-spacing:0px">Сотрудник 1</div>
<div class="t" style="left:349.20px;top:443.66px;font-size:13.4px;color:#000;font-weight:400;letter-spacing:-0.35px">25.03.2019</div>
<div class="t" style="left:438.20px;top:443.66px;font-size:13.4px;color:#000;font-weight:400;letter-spacing:-0.35px">24.05.2019</div>
<div class="t" style="left:534.00px;top:443.66px;font-size:13.4px;color:#000;font-weight:400;letter-spacing:-0.35px">210</div>
<div class="t" style="left:623.00px;top:443.66px;font-size:13.4px;color:#000;font-weight:400;letter-spacing:-0.35px">59</div>
<div class="t" style="left:183.80px;width:600px;text-align:right;top:443.66px;font-size:13.4px;color:#000;font-weight:400;letter-spacing:-0.35px">25.03.2019</div>
<div class="t" style="left:794.20px;top:443.66px;font-size:13.4px;color:#000;font-weight:400;letter-spacing:-0.35px">29.05.2019</div>
<svg class="a" style="left:882px;top:442px;" width="16" height="16" viewBox="0 0 16 16"><rect x="0" y="0" width="2" height="15" fill="#7f7f7f"/><path d="M2.5 0 L14 4.6 L2.5 9.4 Z" fill="#d9532c"/></svg>
<div class="t" style="left:930.00px;top:443.66px;font-size:13.4px;color:#000;font-weight:400;letter-spacing:-0.35px">300</div>
<div class="t" style="left:1059.00px;top:443.66px;font-size:13.4px;color:#000;font-weight:400;letter-spacing:-0.35px">64</div>
<div class="t" style="left:68.60px;top:463.66px;font-size:13.4px;color:#000;font-weight:400;letter-spacing:0px">Проект 2</div>
<div class="t" style="left:164.60px;top:463.66px;font-size:13.4px;color:#000;font-weight:400;letter-spacing:0px">Категория 2</div>
<div class="t" style="left:260.60px;top:463.66px;font-size:13.4px;color:#000;font-weight:400;letter-spacing:0px">Сотрудник 4</div>
<div class="t" style="left:349.20px;top:463.66px;font-size:13.4px;color:#000;font-weight:400;letter-spacing:-0.35px">18.04.2019</div>
<div class="t" style="left:438.20px;top:463.66px;font-size:13.4px;color:#000;font-weight:400;letter-spacing:-0.35px">19.05.2019</div>
<div class="t" style="left:534.00px;top:463.66px;font-size:13.4px;color:#000;font-weight:400;letter-spacing:-0.35px">400</div>
<div class="t" style="left:623.00px;top:463.66px;font-size:13.4px;color:#000;font-weight:400;letter-spacing:-0.35px">31</div>
<div class="t" style="left:183.80px;width:600px;text-align:right;top:463.66px;font-size:13.4px;color:#000;font-weight:400;letter-spacing:-0.35px">18.04.2019</div>
<div class="t" style="left:794.20px;top:463.66px;font-size:13.4px;color:#000;font-weight:400;letter-spacing:-0.35px">22.05.2019</div>
<div class="t" style="left:930.00px;top:463.66px;font-size:13.4px;color:#000;font-weight:400;letter-spacing:-0.35px">390</div>
<div class="t" style="left:1059.00px;top:463.66px;font-size:13.4px;color:#000;font-weight:400;letter-spacing:-0.35px">34</div>
<div class="t" style="left:68.60px;top:483.66px;font-size:13.4px;color:#000;font-weight:400;letter-spacing:0px">Проект 3</div>
<div class="t" style="left:164.60px;top:483.66px;font-size:13.4px;color:#000;font-weight:400;letter-spacing:0px">Категория 1</div>
<div class="t" style="left:260.60px;top:483.66px;font-size:13.4px;color:#000;font-weight:400;letter-spacing:0px">Сотрудник 2</div>
<div class="t" style="left:349.20px;top:483.66px;font-size:13.4px;color:#000;font-weight:400;letter-spacing:-0.35px">18.02.2019</div>
<div class="t" style="left:438.20px;top:483.66px;font-size:13.4px;color:#000;font-weight:400;letter-spacing:-0.35px">19.04.2019</div>
<div class="t" style="left:534.00px;top:483.66px;font-size:13.4px;color:#000;font-weight:400;letter-spacing:-0.35px">500</div>
<div class="t" style="left:623.00px;top:483.66px;font-size:13.4px;color:#000;font-weight:400;letter-spacing:-0.35px">61</div>
<div class="t" style="left:183.80px;width:600px;text-align:right;top:483.66px;font-size:13.4px;color:#000;font-weight:400;letter-spacing:-0.35px">18.02.2019</div>
<div class="t" style="left:794.20px;top:483.66px;font-size:13.4px;color:#000;font-weight:400;letter-spacing:-0.35px">02.05.2019</div>
<div class="t" style="left:930.00px;top:483.66px;font-size:13.4px;color:#000;font-weight:400;letter-spacing:-0.35px">500</div>
<div class="t" style="left:1059.00px;top:483.66px;font-size:13.4px;color:#000;font-weight:400;letter-spacing:-0.35px">74</div>
<div class="t" style="left:68.60px;top:503.66px;font-size:13.4px;color:#000;font-weight:400;letter-spacing:0px">Проект 4</div>
<div class="t" style="left:164.60px;top:503.66px;font-size:13.4px;color:#000;font-weight:400;letter-spacing:0px">Категория 2</div>
<div class="t" style="left:260.60px;top:503.66px;font-size:13.4px;color:#000;font-weight:400;letter-spacing:0px">Сотрудник 3</div>
<div class="t" style="left:349.20px;top:503.66px;font-size:13.4px;color:#000;font-weight:400;letter-spacing:-0.35px">28.02.2019</div>
<div class="t" style="left:438.20px;top:503.66px;font-size:13.4px;color:#000;font-weight:400;letter-spacing:-0.35px">10.03.2019</div>
<div class="t" style="left:534.00px;top:503.66px;font-size:13.4px;color:#000;font-weight:400;letter-spacing:-0.35px">250</div>
<div class="t" style="left:623.00px;top:503.66px;font-size:13.4px;color:#000;font-weight:400;letter-spacing:-0.35px">12</div>
<div class="t" style="left:183.80px;width:600px;text-align:right;top:503.66px;font-size:13.4px;color:#000;font-weight:400;letter-spacing:-0.35px">28.02.2019</div>
<div class="t" style="left:794.20px;top:503.66px;font-size:13.4px;color:#000;font-weight:400;letter-spacing:-0.35px">19.03.2019</div>
<div class="t" style="left:930.00px;top:503.66px;font-size:13.4px;color:#000;font-weight:400;letter-spacing:-0.35px">276</div>
<svg class="a" style="left:1011px;top:502px;" width="16" height="16" viewBox="0 0 16 16"><rect x="0" y="0" width="2" height="15" fill="#7f7f7f"/><path d="M2.5 0 L14 4.6 L2.5 9.4 Z" fill="#d9532c"/></svg>
<div class="t" style="left:1059.00px;top:503.66px;font-size:13.4px;color:#000;font-weight:400;letter-spacing:-0.35px">21</div>
<div class="t" style="left:68.60px;top:523.66px;font-size:13.4px;color:#000;font-weight:400;letter-spacing:0px">Проект 5</div>
<div class="t" style="left:164.60px;top:523.66px;font-size:13.4px;color:#000;font-weight:400;letter-spacing:0px">Категория 3</div>
<div class="t" style="left:260.60px;top:523.66px;font-size:13.4px;color:#000;font-weight:400;letter-spacing:0px">Сотрудник 2</div>
<div class="t" style="left:349.20px;top:523.66px;font-size:13.4px;color:#000;font-weight:400;letter-spacing:-0.35px">28.02.2019</div>
<div class="t" style="left:438.20px;top:523.66px;font-size:13.4px;color:#000;font-weight:400;letter-spacing:-0.35px">09.04.2019</div>
<div class="t" style="left:534.00px;top:523.66px;font-size:13.4px;color:#000;font-weight:400;letter-spacing:-0.35px">300</div>
<div class="t" style="left:623.00px;top:523.66px;font-size:13.4px;color:#000;font-weight:400;letter-spacing:-0.35px">41</div>
<div class="t" style="left:183.80px;width:600px;text-align:right;top:523.66px;font-size:13.4px;color:#000;font-weight:400;letter-spacing:-0.35px">28.02.2019</div>
<div class="t" style="left:794.20px;top:523.66px;font-size:13.4px;color:#000;font-weight:400;letter-spacing:-0.35px">15.04.2019</div>
<div class="t" style="left:930.00px;top:523.66px;font-size:13.4px;color:#000;font-weight:400;letter-spacing:-0.35px">310</div>
<div class="t" style="left:1059.00px;top:523.66px;font-size:13.4px;color:#000;font-weight:400;letter-spacing:-0.35px">47</div>
<div class="t" style="left:68.60px;top:543.66px;font-size:13.4px;color:#000;font-weight:400;letter-spacing:0px">Проект 6</div>
<div class="t" style="left:164.60px;top:543.66px;font-size:13.4px;color:#000;font-weight:400;letter-spacing:0px">Категория 4</div>
<div class="t" style="left:260.60px;top:543.66px;font-size:13.4px;color:#000;font-weight:400;letter-spacing:0px">Сотрудник 4</div>
<div class="t" style="left:349.20px;top:543.66px;font-size:13.4px;color:#000;font-weight:400;letter-spacing:-0.35px">30.03.2019</div>
<div class="t" style="left:438.20px;top:543.66px;font-size:13.4px;color:#000;font-weight:400;letter-spacing:-0.35px">09.04.2019</div>
<div class="t" style="left:534.00px;top:543.66px;font-size:13.4px;color:#000;font-weight:400;letter-spacing:-0.35px">500</div>
<div class="t" style="left:623.00px;top:543.66px;font-size:13.4px;color:#000;font-weight:400;letter-spacing:-0.35px">9</div>
<div class="t" style="left:183.80px;width:600px;text-align:right;top:543.66px;font-size:13.4px;color:#000;font-weight:400;letter-spacing:-0.35px">30.03.2019</div>
<div class="t" style="left:794.20px;top:543.66px;font-size:13.4px;color:#000;font-weight:400;letter-spacing:-0.35px">14.04.2019</div>
<div class="t" style="left:930.00px;top:543.66px;font-size:13.4px;color:#000;font-weight:400;letter-spacing:-0.35px">510</div>
<svg class="a" style="left:1011px;top:542px;" width="16" height="16" viewBox="0 0 16 16"><rect x="0" y="0" width="2" height="15" fill="#7f7f7f"/><path d="M2.5 0 L14 4.6 L2.5 9.4 Z" fill="#d9532c"/></svg>
<div class="t" style="left:1059.00px;top:543.66px;font-size:13.4px;color:#000;font-weight:400;letter-spacing:-0.35px">14</div>
<div class="t" style="left:68.60px;top:563.66px;font-size:13.4px;color:#000;font-weight:400;letter-spacing:0px">Проект 7</div>
<div class="t" style="left:164.60px;top:563.66px;font-size:13.4px;color:#000;font-weight:400;letter-spacing:0px">Категория 5</div>
<div class="t" style="left:260.60px;top:563.66px;font-size:13.4px;color:#000;font-weight:400;letter-spacing:0px">Сотрудник 1</div>
<div class="t" style="left:349.20px;top:563.66px;font-size:13.4px;color:#000;font-weight:400;letter-spacing:-0.35px">15.04.2019</div>
<div class="t" style="left:438.20px;top:563.66px;font-size:13.4px;color:#000;font-weight:400;letter-spacing:-0.35px">09.05.2019</div>
<div class="t" style="left:534.00px;top:563.66px;font-size:13.4px;color:#000;font-weight:400;letter-spacing:-0.35px">750</div>
<div class="t" style="left:623.00px;top:563.66px;font-size:13.4px;color:#000;font-weight:400;letter-spacing:-0.35px">24</div>
<div class="t" style="left:183.80px;width:600px;text-align:right;top:563.66px;font-size:13.4px;color:#000;font-weight:400;letter-spacing:-0.35px">15.04.2019</div>
<div class="t" style="left:794.20px;top:563.66px;font-size:13.4px;color:#000;font-weight:400;letter-spacing:-0.35px">14.05.2019</div>
<div class="t" style="left:930.00px;top:563.66px;font-size:13.4px;color:#000;font-weight:400;letter-spacing:-0.35px">790</div>
<div class="t" style="left:1059.00px;top:563.66px;font-size:13.4px;color:#000;font-weight:400;letter-spacing:-0.35px">29</div>
<div class="t" style="left:68.60px;top:583.66px;font-size:13.4px;color:#000;font-weight:400;letter-spacing:0px">Проект 8</div>
<div class="t" style="left:164.60px;top:583.66px;font-size:13.4px;color:#000;font-weight:400;letter-spacing:0px">Категория 2</div>
<div class="t" style="left:260.60px;top:583.66px;font-size:13.4px;color:#000;font-weight:400;letter-spacing:0px">Сотрудник 1</div>
<div class="t" style="left:349.20px;top:583.66px;font-size:13.4px;color:#000;font-weight:400;letter-spacing:-0.35px">20.04.2019</div>
<div class="t" style="left:438.20px;top:583.66px;font-size:13.4px;color:#000;font-weight:400;letter-spacing:-0.35px">29.05.2019</div>
<div class="t" style="left:534.00px;top:583.66px;font-size:13.4px;color:#000;font-weight:400;letter-spacing:-0.35px">450</div>
<div class="t" style="left:623.00px;top:583.66px;font-size:13.4px;color:#000;font-weight:400;letter-spacing:-0.35px">39</div>
<div class="t" style="left:183.80px;width:600px;text-align:right;top:583.66px;font-size:13.4px;color:#000;font-weight:400;letter-spacing:-0.35px">14.04.2019</div>
<div class="t" style="left:794.20px;top:583.66px;font-size:13.4px;color:#000;font-weight:400;letter-spacing:-0.35px">24.05.2019</div>
<div class="t" style="left:930.00px;top:583.66px;font-size:13.4px;color:#000;font-weight:400;letter-spacing:-0.35px">430</div>
<div class="t" style="left:1059.00px;top:583.66px;font-size:13.4px;color:#000;font-weight:400;letter-spacing:-0.35px">40</div>
<div class="t" style="left:68.60px;top:603.66px;font-size:13.4px;color:#000;font-weight:400;letter-spacing:0px">Проект 9</div>
<div class="t" style="left:164.60px;top:603.66px;font-size:13.4px;color:#000;font-weight:400;letter-spacing:0px">Категория 4</div>
<div class="t" style="left:260.60px;top:603.66px;font-size:13.4px;color:#000;font-weight:400;letter-spacing:0px">Сотрудник 1</div>
<div class="t" style="left:349.20px;top:603.66px;font-size:13.4px;color:#000;font-weight:400;letter-spacing:-0.35px">05.02.2016</div>
<div class="t" style="left:438.20px;top:603.66px;font-size:13.4px;color:#000;font-weight:400;letter-spacing:-0.35px">09.06.2016</div>
<div class="t" style="left:534.00px;top:603.66px;font-size:13.4px;color:#000;font-weight:400;letter-spacing:-0.35px">250</div>
<div class="t" style="left:623.00px;top:603.66px;font-size:13.4px;color:#000;font-weight:400;letter-spacing:-0.35px">124</div>
<div class="t" style="left:183.80px;width:600px;text-align:right;top:603.66px;font-size:13.4px;color:#000;font-weight:400;letter-spacing:-0.35px">05.03.2016</div>
<div class="t" style="left:794.20px;top:603.66px;font-size:13.4px;color:#000;font-weight:400;letter-spacing:-0.35px">05.05.2016</div>
<div class="t" style="left:930.00px;top:603.66px;font-size:13.4px;color:#000;font-weight:400;letter-spacing:-0.35px">200</div>
<svg class="a" style="left:1011px;top:602px;" width="16" height="16" viewBox="0 0 16 16"><rect x="0" y="0" width="2" height="15" fill="#7f7f7f"/><path d="M2.5 0 L14 4.6 L2.5 9.4 Z" fill="#d9532c"/></svg>
<div class="t" style="left:1059.00px;top:603.66px;font-size:13.4px;color:#000;font-weight:400;letter-spacing:-0.35px">60</div>
<div class="a" style="left:1141px;top:238px;width:21px;height:404px;background:#e6e6e6;"></div>
<div class="a" style="left:1144px;top:240px;width:15px;height:15px;background:#fff;border:1px solid #c6c6c6"></div>
<svg class="a" style="left:1148px;top:245px;" width="8" height="5" viewBox="0 0 8 5"><path d="M0 4.5 H7 L3.5 0 Z" fill="#6a6a6a"/></svg>
<div class="a" style="left:1144px;top:255px;width:15px;height:297px;background:#fff;border:1px solid #c6c6c6;border-top:2px solid #b4b4b4"></div>
<div class="a" style="left:1144px;top:552px;width:15px;height:76px;background:#dadada;"></div>
<div class="a" style="left:1144px;top:628px;width:15px;height:15px;background:#fff;border:1px solid #c6c6c6"></div>
<svg class="a" style="left:1148px;top:633px;" width="8" height="5" viewBox="0 0 8 5"><path d="M0 0 H7 L3.5 4.5 Z" fill="#6a6a6a"/></svg>
<div class="a" style="left:31px;top:642px;width:1131px;height:28px;background:#e6e6e6;border-top:1px solid #9b9b9b"></div>
<svg class="a" style="left:58px;top:652px;" width="5" height="9" viewBox="0 0 5 9"><path d="M4.5 0 V7.5 L0.5 3.75 Z" fill="#c4c4c4"/></svg>
<svg class="a" style="left:87px;top:652px;" width="5" height="9" viewBox="0 0 5 9"><path d="M0 0 V7.5 L4 3.75 Z" fill="#c4c4c4"/></svg>
<div class="a" style="left:131px;top:642px;width:60px;height:25px;background:#fff;border-left:1px solid #9b9b9b;border-right:1px solid #9b9b9b"></div>
<div class="a" style="left:131px;top:665px;width:60px;height:2px;background:#217346;"></div>
<div class="t" style="left:-139.30px;width:600px;text-align:center;top:649.00px;font-size:13px;color:#217346;font-weight:700;letter-spacing:-0.3px">Лист1</div>
<svg class="a" style="left:224px;top:647px;" width="17" height="17" viewBox="0 0 17 17"><circle cx="8.5" cy="8.5" r="7.5" stroke="#6a6a6a" stroke-width="1.2" fill="none"/><path d="M8.5 4.5 V12.5 M4.5 8.5 H12.5" stroke="#6a6a6a" stroke-width="1.6"/></svg>
<div class="a" style="left:709px;top:650px;width:2px;height:2px;background:#a0a0a0;"></div>
<div class="a" style="left:709px;top:654px;width:2px;height:2px;background:#a0a0a0;"></div>
<div class="a" style="left:709px;top:658px;width:2px;height:2px;background:#a0a0a0;"></div>
<div class="a" style="left:726px;top:649px;width:15px;height:15px;background:#fff;border:1px solid #c6c6c6"></div>
<svg class="a" style="left:731px;top:653px;" width="5" height="8" viewBox="0 0 5 8"><path d="M4.5 0 V7.5 L0 3.75 Z" fill="#505050"/></svg>
<div class="a" style="left:741px;top:649px;width:333px;height:15px;background:#fff;border:1px solid #c6c6c6"></div>
<div class="a" style="left:1074px;top:649px;width:54px;height:15px;background:#dadada;"></div>
<div class="a" style="left:1128px;top:649px;width:15px;height:15px;background:#fff;border:1px solid #c6c6c6"></div>
<svg class="a" style="left:1134px;top:653px;" width="5" height="8" viewBox="0 0 5 8"><path d="M0 0 V7.5 L4.5 3.75 Z" fill="#505050"/></svg>
<div class="a" style="left:31px;top:670px;width:1131px;height:22px;background:#f3f2f1;border-top:1px solid #d4d4d4"></div>
<div class="a" style="left:862px;top:671px;width:38px;height:21px;background:#c8c6c4;"></div>
<svg class="a" style="left:874px;top:674px;" width="14" height="14" viewBox="0 0 14 14"><rect x="0" y="0" width="13" height="13" fill="#6a6a6a"/><rect x="1" y="1" width="3" height="3" fill="#d4d4d4"/><rect x="1" y="5" width="3" height="3" fill="#d4d4d4"/><rect x="1" y="9" width="3" height="3" fill="#d4d4d4"/><rect x="5" y="1" width="3" height="3" fill="#d4d4d4"/><rect x="5" y="5" width="3" height="3" fill="#d4d4d4"/><rect x="5" y="9" width="3" height="3" fill="#d4d4d4"/><rect x="9" y="1" width="3" height="3" fill="#d4d4d4"/><rect x="9" y="5" width="3" height="3" fill="#d4d4d4"/><rect x="9" y="9" width="3" height="3" fill="#d4d4d4"/></svg>
<svg class="a" style="left:912px;top:674px;" width="15" height="14" viewBox="0 0 15 14"><rect x="0.6" y="0.6" width="12.8" height="12.2" stroke="#6a6a6a" stroke-width="1.2" fill="none"/><rect x="3.5" y="2.5" width="7" height="8" stroke="#6a6a6a" fill="none"/><path d="M5 4.5 H9 M5 6.5 H9 M5 8.5 H9" stroke="#6a6a6a"/></svg>
<svg class="a" style="left:950px;top:674px;" width="15" height="14" viewBox="0 0 15 14"><rect x="0.6" y="0.6" width="12.8" height="12.2" stroke="#6a6a6a" stroke-width="1.2" fill="none"/><path d="M4.5 0.6 V7.5 H8.5 V0.6 M8.5 2.5 H13" stroke="#6a6a6a" fill="none" stroke-width="1.1"/></svg>
<div class="a" style="left:981px;top:680px;width:6px;height:2px;background:#505050;"></div>
<div class="a" style="left:991px;top:681px;width:100px;height:1px;background:#a0a0a0;"></div>
<div class="a" style="left:1039px;top:675px;width:5px;height:11px;background:#6a6a6a;"></div>
<svg class="a" style="left:1094px;top:677px;" width="8" height="8" viewBox="0 0 8 8"><path d="M4 0 V8 M0 4 H8" stroke="#505050" stroke-width="1.8"/></svg>
<div class="t" style="left:1113.80px;top:675.36px;font-size:10.8px;color:#444;font-weight:400;letter-spacing:-0.15px">100 %</div>
<div class="a" style="left:728px;top:166px;width:305px;height:161px;background:#fff;border:1px solid #c6c6c6;box-shadow:1px 2px 4px rgba(0,0,0,.25)"></div>
<div class="a" style="left:729px;top:170px;width:305px;height:53px;background:#c8c8c8;border:1px solid #9c9c9c;background:linear-gradient(#a8a8a8,#c6c6c6 8px,#c6c6c6)"></div>
<svg class="a" style="left:737.5px;top:185.5px;" width="29" height="23" viewBox="0 0 29 23"><rect x="10.0" y="0.5" width="9.0" height="7.3" fill="#9ecbf0" stroke="#3c3c3c" stroke-width="1"/><rect x="19.0" y="0.5" width="9.0" height="7.3" fill="#9ecbf0" stroke="#3c3c3c" stroke-width="1"/><rect x="0.5" y="7.8" width="9.5" height="7.2" fill="#9ecbf0" stroke="#3c3c3c" stroke-width="1"/><rect x="10.0" y="7.8" width="9.0" height="7.2" fill="#fff" stroke="#3c3c3c" stroke-width="1"/><rect x="19.0" y="7.8" width="9.0" height="7.2" fill="#fff" stroke="#3c3c3c" stroke-width="1"/><rect x="0.5" y="15.0" width="9.5" height="7.300000000000001" fill="#9ecbf0" stroke="#3c3c3c" stroke-width="1"/><rect x="10.0" y="15.0" width="9.0" height="7.300000000000001" fill="#fff" stroke="#3c3c3c" stroke-width="1"/><rect x="19.0" y="15.0" width="9.0" height="7.300000000000001" fill="#fff" stroke="#3c3c3c" stroke-width="1"/><rect x="10.0" y="0.5" width="9.0" height="7.3" fill="none" stroke="#1e7bd0" stroke-width="1.2"/><rect x="19.0" y="0.5" width="9.0" height="7.3" fill="none" stroke="#1e7bd0" stroke-width="1.2"/><rect x="0.5" y="7.8" width="9.5" height="7.2" fill="none" stroke="#1e7bd0" stroke-width="1.2"/><rect x="0.5" y="15.0" width="9.5" height="7.300000000000001" fill="none" stroke="#1e7bd0" stroke-width="1.2"/><path d="M3.60 -4.80 L3.60 6.00 M3.60 6.00 L4.63 4.53 M3.60 6.00 L2.57 4.53 M3.60 -4.80 L2.57 -3.33 M3.60 -4.80 L4.63 -3.33 M-1.08 -2.10 L8.28 3.30 M8.28 3.30 L7.52 1.67 M8.28 3.30 L6.48 3.46 M-1.08 -2.10 L-0.32 -0.47 M-1.08 -2.10 L0.72 -2.26 M8.28 -2.10 L-1.08 3.30 M-1.08 3.30 L0.72 3.46 M-1.08 3.30 L-0.32 1.67 M8.28 -2.10 L6.48 -2.26 M8.28 -2.10 L7.52 -0.47 " stroke="#2a8ad4" stroke-width="1.9" fill="none" stroke-linecap="round"/></svg>
<svg class="a" style="left:737.5px;top:237px;" width="29" height="23" viewBox="0 0 29 23"><rect x="10.0" y="0.5" width="9.0" height="7.3" fill="#9ecbf0" stroke="#3c3c3c" stroke-width="1"/><rect x="19.0" y="0.5" width="9.0" height="7.3" fill="#9ecbf0" stroke="#3c3c3c" stroke-width="1"/><rect x="0.5" y="7.8" width="9.5" height="7.2" fill="#fff" stroke="#3c3c3c" stroke-width="1"/><rect x="10.0" y="7.8" width="9.0" height="7.2" fill="#fff" stroke="#3c3c3c" stroke-width="1"/><rect x="19.0" y="7.8" width="9.0" height="7.2" fill="#fff" stroke="#3c3c3c" stroke-width="1"/><rect x="0.5" y="15.0" width="9.5" height="7.300000000000001" fill="#fff" stroke="#3c3c3c" stroke-width="1"/><rect x="10.0" y="15.0" width="9.0" height="7.300000000000001" fill="#fff" stroke="#3c3c3c" stroke-width="1"/><rect x="19.0" y="15.0" width="9.0" height="7.300000000000001" fill="#fff" stroke="#3c3c3c" stroke-width="1"/><rect x="10.0" y="0.5" width="9.0" height="7.3" fill="none" stroke="#1e7bd0" stroke-width="1.2"/><rect x="19.0" y="0.5" width="9.0" height="7.3" fill="none" stroke="#1e7bd0" stroke-width="1.2"/><path d="M3.60 -4.80 L3.60 6.00 M3.60 6.00 L4.63 4.53 M3.60 6.00 L2.57 4.53 M3.60 -4.80 L2.57 -3.33 M3.60 -4.80 L4.63 -3.33 M-1.08 -2.10 L8.28 3.30 M8.28 3.30 L7.52 1.67 M8.28 3.30 L6.48 3.46 M-1.08 -2.10 L-0.32 -0.47 M-1.08 -2.10 L0.72 -2.26 M8.28 -2.10 L-1.08 3.30 M-1.08 3.30 L0.72 3.46 M-1.08 3.30 L-0.32 1.67 M8.28 -2.10 L6.48 -2.26 M8.28 -2.10 L7.52 -0.47 " stroke="#2a8ad4" stroke-width="1.9" fill="none" stroke-linecap="round"/></svg>
<svg class="a" style="left:737.5px;top:287.5px;" width="29" height="23" viewBox="0 0 29 23"><rect x="10.0" y="0.5" width="9.0" height="7.3" fill="#fff" stroke="#3c3c3c" stroke-width="1"/><rect x="19.0" y="0.5" width="9.0" height="7.3" fill="#fff" stroke="#3c3c3c" stroke-width="1"/><rect x="0.5" y="7.8" width="9.5" height="7.2" fill="#9ecbf0" stroke="#3c3c3c" stroke-width="1"/><rect x="10.0" y="7.8" width="9.0" height="7.2" fill="#fff" stroke="#3c3c3c" stroke-width="1"/><rect x="19.0" y="7.8" width="9.0" height="7.2" fill="#fff" stroke="#3c3c3c" stroke-width="1"/><rect x="0.5" y="15.0" width="9.5" height="7.300000000000001" fill="#9ecbf0" stroke="#3c3c3c" stroke-width="1"/><rect x="10.0" y="15.0" width="9.0" height="7.300000000000001" fill="#fff" stroke="#3c3c3c" stroke-width="1"/><rect x="19.0" y="15.0" width="9.0" height="7.300000000000001" fill="#fff" stroke="#3c3c3c" stroke-width="1"/><rect x="0.5" y="7.8" width="9.5" height="7.2" fill="none" stroke="#1e7bd0" stroke-width="1.2"/><rect x="0.5" y="15.0" width="9.5" height="7.300000000000001" fill="none" stroke="#1e7bd0" stroke-width="1.2"/><path d="M3.60 -4.80 L3.60 6.00 M3.60 6.00 L4.63 4.53 M3.60 6.00 L2.57 4.53 M3.60 -4.80 L2.57 -3.33 M3.60 -4.80 L4.63 -3.33 M-1.08 -2.10 L8.28 3.30 M8.28 3.30 L7.52 1.67 M8.28 3.30 L6.48 3.46 M-1.08 -2.10 L-0.32 -0.47 M-1.08 -2.10 L0.72 -2.26 M8.28 -2.10 L-1.08 3.30 M-1.08 3.30 L0.72 3.46 M-1.08 3.30 L-0.32 1.67 M8.28 -2.10 L6.48 -2.26 M8.28 -2.10 L7.52 -0.47 " stroke="#2a8ad4" stroke-width="1.9" fill="none" stroke-linecap="round"/></svg>
<div class="t" style="left:782.20px;top:176.10px;font-size:11.7px;color:#303030;font-weight:700;letter-spacing:-0.1px"><u>З</u>акрепить области</div>
<div class="t" style="left:782.20px;top:193.97px;font-size:11.85px;color:#444444;font-weight:400;">Выделенные строки и столбцы всегда будут</div>
<div class="t" style="left:782.20px;top:208.27px;font-size:11.85px;color:#444444;font-weight:400;">видны на экране во время прокрутки листа.</div>
<div class="t" style="left:782.20px;top:227.60px;font-size:11.7px;color:#303030;font-weight:700;letter-spacing:0.02px">Закрепить вер<u>х</u>нюю строку</div>
<div class="t" style="left:782.20px;top:245.27px;font-size:11.85px;color:#444444;font-weight:400;letter-spacing:-0.2px">Верхняя строка всегда будет видна на</div>
<div class="t" style="left:782.20px;top:260.17px;font-size:11.85px;color:#444444;font-weight:400;letter-spacing:0.07px">экране во время прокрутки листа.</div>
<div class="t" style="left:782.20px;top:278.10px;font-size:11.7px;color:#303030;font-weight:700;letter-spacing:0.02px">Закрепить перв<u>ы</u>й столбец</div>
<div class="t" style="left:782.20px;top:296.17px;font-size:11.85px;color:#444444;font-weight:400;letter-spacing:-0.08px">Первый столбец всегда будет виден на</div>
<div class="t" style="left:782.20px;top:311.17px;font-size:11.85px;color:#444444;font-weight:400;letter-spacing:0.07px">экране во время прокрутки листа.</div>
<div class="a" style="left:729px;top:229px;width:303px;height:5px;background:linear-gradient(rgba(150,150,150,.55),rgba(255,255,255,.35) 60%,rgba(255,255,255,0));"></div>
<div class="a" style="left:721px;top:164px;width:318px;height:66px;border:1.5px solid #fff;border-radius:12px;box-shadow:0 2px 3px rgba(0,0,0,.35)"></div>
<div class="a" style="left:722.5px;top:165.4px;width:315.7px;height:63.6px;border:3.6px solid #f00;border-radius:10px;box-shadow:inset 0 0 0 1.2px #fff, inset 0 -2px 0 1.2px #fff"></div>
</body></html>
